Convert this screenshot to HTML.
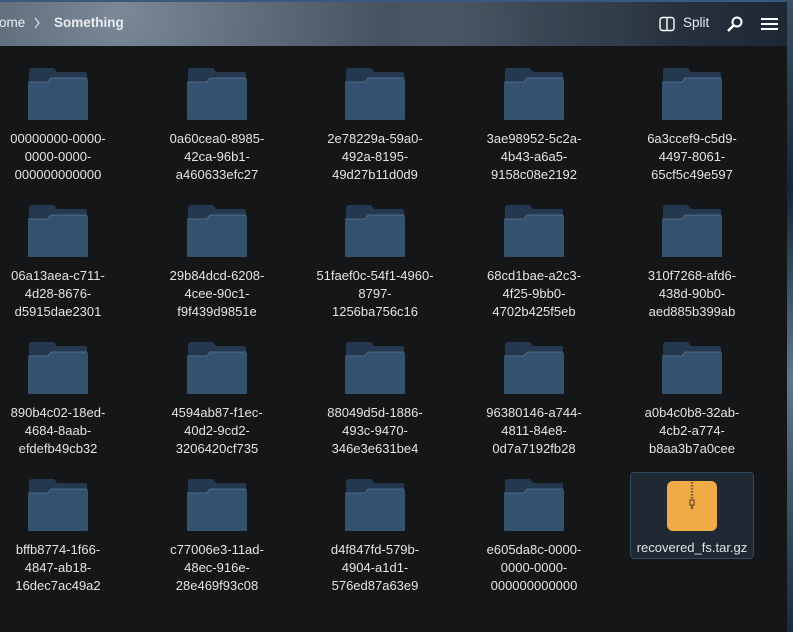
<!DOCTYPE html>
<html><head><style>
body{margin:0;width:793px;height:632px;overflow:hidden;background:#0d1a2a;font-family:"Liberation Sans","DejaVu Sans",sans-serif;position:relative}
.side{position:absolute;left:787px;top:0;width:6px;height:632px;background:linear-gradient(#3a5068,#16263a 30%,#5c7890 60%,#1a2a3c)}
.win{position:absolute;left:0;top:0;width:787px;height:632px;background:#141618}
.hdr{position:absolute;left:0;top:0;width:787px;height:46px;background:radial-gradient(circle at 120px 10px,#7a8898,#46525f 40%,transparent 70%),radial-gradient(circle at 330px 30px,#6e7c8a,#36424f 45%,transparent 75%),linear-gradient(90deg,#46525f,#56646f 30%,#404c58 60%,#28323e 85%,#1e2834);border-top:2px solid #3a5a7c;box-sizing:border-box}
.bc{position:absolute;top:13px;font-size:13.5px;color:#e8ecf0}
.item{position:absolute;width:150px;text-align:center;color:#e2e4e6;font-size:13px;line-height:18px}
.item svg{display:block;margin:0 auto 9px}
.sel{position:absolute;left:630px;top:472px;width:122px;height:85px;background:#1f2833;border:1px solid #2f4a63;border-radius:4px}
</style></head><body>
<div class="side"></div>
<div class="win">
<div class="hdr">
<span class="bc" style="left:-1px">ome</span>
<svg style="position:absolute;left:33px;top:15px" width="8" height="12"><path d="M2 1l4 5-4 5" stroke="#dde" fill="none" stroke-width="1.2"/></svg>
<span class="bc" style="left:54px;font-weight:bold">Something</span>
<svg style="position:absolute;left:659px;top:14px" width="16" height="16"><rect x="1" y="1.5" width="14" height="13" rx="2.5" fill="none" stroke="#fff" stroke-width="1.4"/><line x1="8" y1="2" x2="8" y2="14" stroke="#fff" stroke-width="1.4"/></svg>
<span class="bc" style="left:683px">Split</span>
<svg style="position:absolute;left:726px;top:13px" width="18" height="18"><circle cx="11" cy="7" r="4.5" fill="none" stroke="#fff" stroke-width="2"/><line x1="8" y1="10" x2="2" y2="16" stroke="#fff" stroke-width="2.4"/></svg>
<svg style="position:absolute;left:761px;top:15px" width="17" height="14"><path d="M0 2h17M0 7h17M0 12h17" stroke="#fff" stroke-width="2"/></svg>
</div>
<div class="sel"></div>
<div id="g"></div>
</div>
<script>
const names=[["00000000-0000-","0000-0000-","000000000000"],["0a60cea0-8985-","42ca-96b1-","a460633efc27"],["2e78229a-59a0-","492a-8195-","49d27b11d0d9"],["3ae98952-5c2a-","4b43-a6a5-","9158c08e2192"],["6a3ccef9-c5d9-","4497-8061-","65cf5c49e597"],
["06a13aea-c711-","4d28-8676-","d5915dae2301"],["29b84dcd-6208-","4cee-90c1-","f9f439d9851e"],["51faef0c-54f1-4960-","8797-","1256ba756c16"],["68cd1bae-a2c3-","4f25-9bb0-","4702b425f5eb"],["310f7268-afd6-","438d-90b0-","aed885b399ab"],
["890b4c02-18ed-","4684-8aab-","efdefb49cb32"],["4594ab87-f1ec-","40d2-9cd2-","3206420cf735"],["88049d5d-1886-","493c-9470-","346e3e631be4"],["96380146-a744-","4811-84e8-","0d7a7192fb28"],["a0b4c0b8-32ab-","4cb2-a774-","b8aa3b7a0cee"],
["bffb8774-1f66-","4847-ab18-","16dec7ac49a2"],["c77006e3-11ad-","48ec-916e-","28e469f93c08"],["d4f847fd-579b-","4904-a1d1-","576ed87a63e9"],["e605da8c-0000-","0000-0000-","000000000000"],["recovered_fs.tar.gz"]];
const folder='<svg width="60" height="53" viewBox="0 0 60 53"><path d="M1 3q0-3 3-3h22l3 4h28q2 0 2 2v10H1z" fill="#243850"/><path d="M0 16q0-2 2-2h18l3-4h35q2 0 2 2v39q0 1-1 1H1q-1 0-1-1z" fill="#34526f"/><path d="M0 14h20l3-4h36" stroke="#5a7690" stroke-width=".8" fill="none"/></svg>';
const zip='<svg width="50" height="50" viewBox="0 0 50 50" style="margin-top:2px;margin-bottom:8px"><rect width="50" height="50" rx="6" fill="#f0aa46"/><path d="M25 1v18" stroke="#7a5a30" stroke-width="2.4" stroke-dasharray="1.5 1.5"/><rect x="23" y="19" width="4" height="5" fill="none" stroke="#7a5a30" stroke-width="1.4"/><path d="M25 24v4" stroke="#7a5a30" stroke-width="2.4"/></svg>';
let h='';names.forEach((n,i)=>{const c=i%5,r=Math.floor(i/5);const cx=[58,217,375,534,692][c];
h+=`<div class="item" style="left:${cx-75}px;top:${68+r*137}px">${i==19?zip:folder}${n.join('<br>')}</div>`;});
document.getElementById('g').innerHTML=h;
</script>
</body></html>
